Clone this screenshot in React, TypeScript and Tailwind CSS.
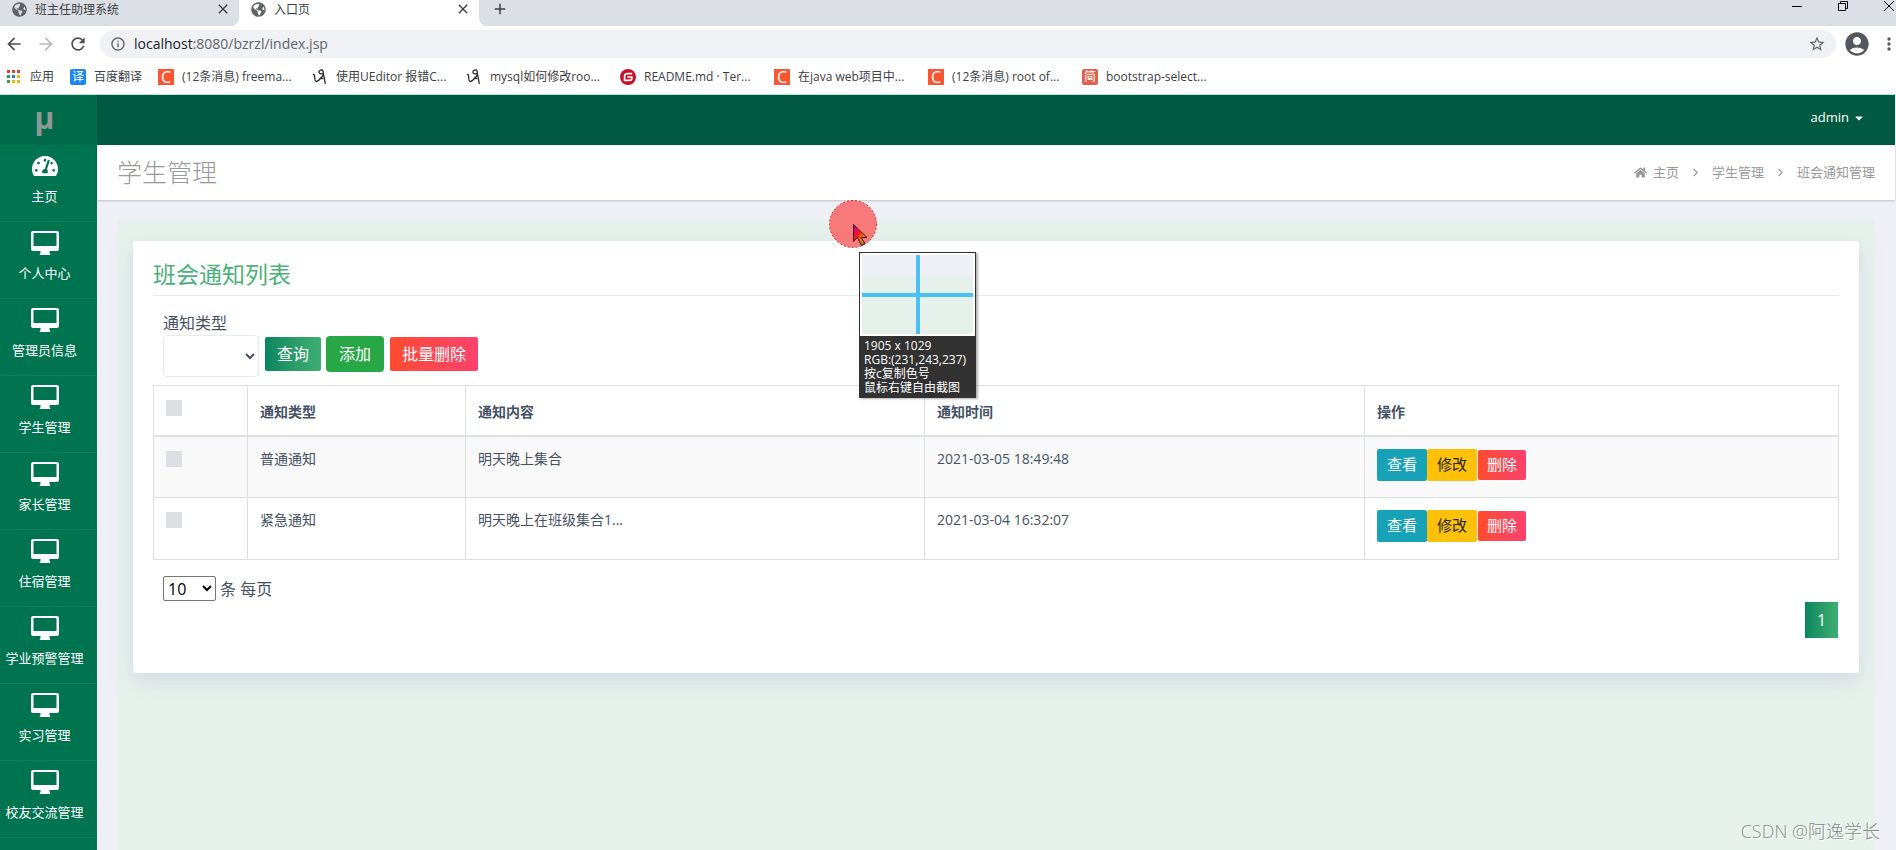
import React from "react";
import { FaCaretDown, FaGlobeAmericas, FaHome, FaTachometerAlt } from "react-icons/fa";
import { ChevronRight } from "lucide-react";
import {
  MdArrowBack,
  MdArrowForward,
  MdRefresh,
  MdInfoOutline,
  MdStarBorder,
  MdAccountCircle,
  MdClose,
  MdAdd,
} from "react-icons/md";

function CsdnIcon() {
  return (
    <span className="flex size-4 shrink-0 items-center justify-center bg-[#fc5531] text-base leading-4 text-white">C</span>
  );
}

function SquiggleIcon() {
  return (
    <svg viewBox="0 0 16 16" className="size-4 shrink-0" fill="none" stroke="#2c2c2c" strokeWidth="1.3">
      <path d="M.8 5.600c1.400-.4 1.900.6 1.900 2.400 0 2.400.2 4.500 1.700 4.500 2 0 4-2.600 7-6.500" />
      <path d="M11 1.200C8.800.6 6.800 1.600 6.900 3.300c.1 1.800 3.500 2 4.300.5.500-1-.1-2-.9-2.300M11 3.500c.9 3 1.700 7 2.300 11.500" />
      <path d="M7.500 9.500h4" />
    </svg>
  );
}

function GiteeIcon() {
  return (
    <svg viewBox="0 0 16 16" className="size-4 shrink-0">
      <circle cx="8" cy="8" r="8" fill="#c8102a" />
      <path d="M12.200 4.600H7A2.400 2.400 0 0 0 4.600 7v4.400h5a2.200 2.200 0 0 0 2.200-2.200V8H7.300" fill="none" stroke="#fff" strokeWidth="1.700" />
    </svg>
  );
}

const bookmarks = [
  { icon: <CsdnIcon />, text: "(12条消息) freema..." },
  { icon: <SquiggleIcon />, text: "使用UEditor 报错C..." },
  { icon: <SquiggleIcon />, text: "mysql如何修改roo..." },
  { icon: <GiteeIcon />, text: "README.md · Ter..." },
  { icon: <CsdnIcon />, text: "在java web项目中..." },
  { icon: <CsdnIcon />, text: "(12条消息) root of..." },
  {
    icon: (
      <span className="flex size-4 shrink-0 items-center justify-center rounded-xs bg-[#e0604c] text-xs leading-4 text-white">简</span>
    ),
    text: "bootstrap-select...",
  },
];

const appDots = [
  "bg-[#e34133]", "bg-[#e34133]", "bg-[#e34133]",
  "bg-[#2f9e52]", "bg-[#2f7de9]", "bg-[#f4b400]",
  "bg-[#2f9e52]", "bg-[#f4b400]", "bg-[#f4b400]",
];

function BrowserChrome() {
  return (
    <div className="border-b border-[#b5e3d5] bg-white text-xs text-[#3c4043]">
      <div className="flex h-[26px] items-stretch bg-white">
        <div className="flex w-[239px] items-start gap-2 rounded-br-lg bg-[#dcdfe6] pr-2 pl-3">
          <FaGlobeAmericas className="mt-0.5 size-[15px] text-[#5f6368]" />
          <span className="flex-1 leading-5">班主任助理系统</span>
          <button aria-label="关闭" className="mt-px"><MdClose className="size-4" stroke="currentColor" /></button>
        </div>
        <div className="flex w-60 items-start gap-2 bg-white pr-2 pl-3">
          <FaGlobeAmericas className="mt-0.5 size-[15px] text-[#5f6368]" />
          <span className="flex-1 leading-5">入口页</span>
          <button aria-label="关闭" className="mt-px"><MdClose className="size-4" stroke="currentColor" /></button>
        </div>
        <div className="flex flex-1 items-start justify-between rounded-bl-lg bg-[#dcdfe6] pr-px pl-3">
          <button aria-label="新标签页"><MdAdd className="size-[18px]" stroke="currentColor" /></button>
          <div className="flex items-start gap-[34px] text-black">
            <button aria-label="最小化">
              <svg className="size-3" viewBox="0 0 12 12" stroke="currentColor"><path d="M1 6.500h10" /></svg>
            </button>
            <button aria-label="还原">
              <svg className="size-3" viewBox="0 0 12 12" stroke="currentColor" fill="none"><path d="M1.500 3.500h7v7h-7zM3.500 3.500v-2h7v7h-2" /></svg>
            </button>
            <button aria-label="关闭窗口">
              <svg className="size-3" viewBox="0 0 12 12" stroke="currentColor"><path d="M1 1l10 10M11 1L1 11" /></svg>
            </button>
          </div>
        </div>
      </div>
      <div className="flex h-9 items-center pl-1">
        <button aria-label="后退"><MdArrowBack className="size-5 text-[#4d5156]" /></button>
        <button aria-label="前进" className="ml-3"><MdArrowForward className="size-5 text-[#b9bbbe]" /></button>
        <button aria-label="刷新" className="ml-3"><MdRefresh className="size-5 text-[#4d5156]" /></button>
        <div className="ml-3 flex h-7 flex-1 items-center gap-2 rounded-full bg-[#eff1f5] px-2.5">
          <MdInfoOutline className="size-4 text-[#5f6368]" />
          <span className="flex-1 text-sm text-[#5f6368]">
            <span className="text-[#202124]">localhost</span>:8080/bzrzl/index.jsp
          </span>
          <MdStarBorder className="size-[18px] text-[#5f6368]" />
        </div>
        <MdAccountCircle className="ml-[7px] size-7 text-[#54585e]" />
        <button aria-label="菜单" className="ml-[11px]">
          <svg className="h-4 w-3.5" viewBox="0 0 14 16" fill="#54585e">
            <circle cx="7" cy="3" r="1.700" />
            <circle cx="7" cy="8" r="1.700" />
            <circle cx="7" cy="13" r="1.700" />
          </svg>
        </button>
      </div>
      <div className="flex h-8 items-center pb-[3px] pl-[7px] leading-4">
        <span className="grid grid-cols-3 gap-[2px]">
          {appDots.map((c, i) => (
            <span key={i} className={"size-[3px] " + c} />
          ))}
        </span>
        <a href="#" className="ml-2.5 w-10">应用</a>
        <span className="flex size-4 items-center justify-center rounded-xs bg-[#1a86f0] text-white">译</span>
        <a href="#" className="ml-2 w-16">百度翻译</a>
        {bookmarks.map((b, i) => (
          <a href="#" key={i} className="flex w-[154px] shrink-0 items-center gap-2 whitespace-nowrap">
            {b.icon}
            <span>{b.text}</span>
          </a>
        ))}
      </div>
    </div>
  );
}

function MonitorIcon() {
  return (
    <svg viewBox="0 0 28 24" className="h-6 w-7" fill="currentColor">
      <path fillRule="evenodd" d="M2 0h24a2 2 0 0 1 2 2v16a2 2 0 0 1-2 2h-7.500v2l1 2h-11l1-2v-2H2a2 2 0 0 1-2-2V2a2 2 0 0 1 2-2zm.500 2v13h23V2z" />
    </svg>
  );
}

const navItems = ["主页", "个人中心", "管理员信息", "学生管理", "家长管理", "住宿管理", "学业预警管理", "实习管理", "校友交流管理"];

function Sidebar() {
  return (
    <nav className="w-[97px] shrink-0 bg-[#00734f] text-[13px] text-white">
      <div className="flex h-[50px] items-center justify-center bg-[#006a4a] pr-2 pb-1 text-3xl font-bold text-[#8f9a95]">μ</div>
      {navItems.map((name, i) => (
        <a href="#" key={name} className="flex h-[77px] flex-col items-center border-b border-[#0a7d59] pt-[9px] pr-2">
          {i === 0 ? <FaTachometerAlt className="h-6 w-[26px]" /> : <MonitorIcon />}
          <span className="mt-[9px] leading-[18px] whitespace-nowrap">{name}</span>
        </a>
      ))}
    </nav>
  );
}

const rows = [
  { type: "普通通知", content: "明天晚上集合", time: "2021-03-05 18:49:48" },
  { type: "紧急通知", content: "明天晚上在班级集合1...", time: "2021-03-04 16:32:07" },
];

const checkbox = "block size-4 appearance-none bg-[#dcdfe4]";
const cell = "border border-[#dcdfe4] px-3 align-top";

function NoticeTable() {
  return (
    <table className="w-full table-fixed border-collapse text-left text-sm">
      <colgroup>
        <col className="w-[94px]" />
        <col className="w-[218px]" />
        <col className="w-[459px]" />
        <col className="w-[440px]" />
        <col />
      </colgroup>
      <thead>
        <tr className="h-[50px] border-b-2 border-[#dcdfe4]">
          <th className={cell + " pt-3.5"}><input type="checkbox" aria-label="全选" className={checkbox} /></th>
          {["通知类型", "通知内容", "通知时间", "操作"].map((h) => (
            <th key={h} className={cell + " pt-4 font-bold"}>{h}</th>
          ))}
        </tr>
      </thead>
      <tbody>
        {rows.map((r) => (
          <tr key={r.time} className="h-[62px] odd:bg-[#f9f9fa]">
            <td className={cell + " pt-3.5"}><input type="checkbox" aria-label={r.type} className={checkbox} /></td>
            <td className={cell + " pt-3"}>{r.type}</td>
            <td className={cell + " pt-3"}>{r.content}</td>
            <td className={cell + " pt-3"}>{r.time}</td>
            <td className={cell + " pt-3"}>
              <div className="flex items-center text-[15px]">
                <button className="h-8 w-[50px] rounded-xs bg-[#17a2b8] text-white">查看</button>
                <button className="h-8 w-[50px] rounded-xs bg-[#ffc107] text-[#212529]">修改</button>
                <button className="ml-px h-[30px] w-12 rounded-xs bg-linear-to-r from-[#ff4b2b] to-[#ff416c] text-white">删除</button>
              </div>
            </td>
          </tr>
        ))}
      </tbody>
    </table>
  );
}

function Magnifier() {
  return (
    <div className="absolute top-[252px] left-[859px] w-[117px] bg-[#323232] text-xs text-white shadow-[2px_1px_2px_rgba(0,0,0,0.3)]">
      <div className="border border-[#323232] bg-white p-0.5">
        <div className="relative h-[79px] bg-linear-to-b from-[#eff0f6] from-27% to-[#e7f1eb] to-27%">
          <div className="absolute inset-y-0 left-1/2 w-1 -translate-x-1/2 bg-[#48c0f8]" />
          <div className="absolute inset-x-0 top-1/2 h-1 -translate-y-1/2 bg-[#48c0f8]" />
        </div>
      </div>
      <div className="flex h-[61px] flex-col px-[5px] pt-0.5 leading-[14px] whitespace-nowrap">
        <span>1905 x 1029</span>
        <span>RGB:(231,243,237)</span>
        <span>按c复制色号</span>
        <span>鼠标右键自由截图</span>
      </div>
    </div>
  );
}

function Pointer() {
  return (
    <svg className="absolute top-[200px] left-[829px] h-12 w-12" viewBox="0 0 48 48">
      <defs>
        <linearGradient id="arrow" x1="0" y1="0" x2=".8" y2="1">
          <stop offset="0" stopColor="#9000b0" />
          <stop offset=".25" stopColor="#f0006c" />
          <stop offset=".45" stopColor="#f01818" />
          <stop offset=".7" stopColor="#f08000" />
          <stop offset="1" stopColor="#608020" />
        </linearGradient>
      </defs>
      <circle cx="24" cy="24" r="23.500" fill="#f96464" fillOpacity=".85" stroke="#c83030" strokeDasharray="2 2" />
      <path d="M24.500 24.500v17l4-4 4 8 3.500-2-4-6h6z" fill="url(#arrow)" stroke="#401010" />
    </svg>
  );
}

export default function App() {
  return (
    <div className="relative flex h-screen flex-col overflow-hidden bg-[#eff0f6] font-['Open_Sans','Noto_Sans_CJK_SC',sans-serif] text-[#455164]">
      <BrowserChrome />
      <div className="flex min-h-0 flex-1 pr-px">
        <Sidebar />
        <div className="flex min-w-0 flex-1 flex-col">
          <header className="flex h-[50px] shrink-0 items-center justify-end bg-[#005a41] pr-[30px] pb-1">
            <button className="flex items-center gap-1 text-[13px] font-medium text-white">
              admin <FaCaretDown className="size-3" />
            </button>
          </header>
          <div className="flex h-[55px] shrink-0 items-center justify-between bg-white px-5 text-[#999] shadow-[0_1px_2px_rgba(0,0,0,0.2)]">
            <h1 className="text-[25px] font-light">学生管理</h1>
            <div className="flex items-center text-[13px]">
              <FaHome className="mr-1.5 size-[13px]" />
              <a href="#">主页</a>
              <ChevronRight className="mx-[10px] size-[13px]" />
              <a href="#">学生管理</a>
              <ChevronRight className="mx-[10px] size-[13px]" />
              <span>班会通知管理</span>
            </div>
          </div>
          <main className="mx-5 mt-5 flex-1 bg-[#e7f1eb] px-4 pt-[21px]">
            <section className="rounded-xs bg-white px-5 pt-4 pb-[35px] shadow-[0_8px_20px_rgba(190,200,225,0.5)]">
              <h2 className="border-b border-[#e9ecef] pb-1 text-[23px] leading-[34px] text-[#4bb07a]">班会通知列表</h2>
              <div className="px-2.5 pt-[15px]">
                <label htmlFor="type" className="block leading-6">通知类型</label>
                <div className="flex items-start">
                  <select id="type" className="h-[42px] w-24 rounded-sm border border-[#e9ecef] bg-white px-2" />
                  <div className="flex h-[38px] items-center">
                    <button className="ml-1.5 h-[34px] w-14 rounded-xs bg-linear-to-r from-[#06875f] to-[#3eaf72] text-white">查询</button>
                    <button className="ml-[5px] h-9 w-[58px] rounded-sm bg-[#28a745] text-white">添加</button>
                    <button className="ml-1.5 h-[34px] w-[88px] rounded-xs bg-linear-to-r from-[#ff4b2b] to-[#ff416c] text-white">批量删除</button>
                  </div>
                </div>
              </div>
              <div className="pt-2"><NoticeTable /></div>
              <div className="flex items-center gap-1 px-2.5 pt-4">
                <select id="size" className="h-[25px] w-[53px] rounded-xs border border-[#767676] bg-white text-black" defaultValue="10">
                  <option>10</option>
                </select>
                <label htmlFor="size" className="leading-6">条 每页</label>
              </div>
              <div className="flex justify-end pt-px pr-px">
                <button className="h-9 w-[33px] bg-linear-to-r from-[#06875f] to-[#3eaf72] text-white">1</button>
              </div>
            </section>
          </main>
        </div>
      </div>
      <Pointer />
      <Magnifier />
      <div className="absolute right-4 bottom-[5px] text-lg font-light text-[#858987] [text-shadow:1px_1px_0_#fff]">CSDN @阿逸学长</div>
    </div>
  );
}
